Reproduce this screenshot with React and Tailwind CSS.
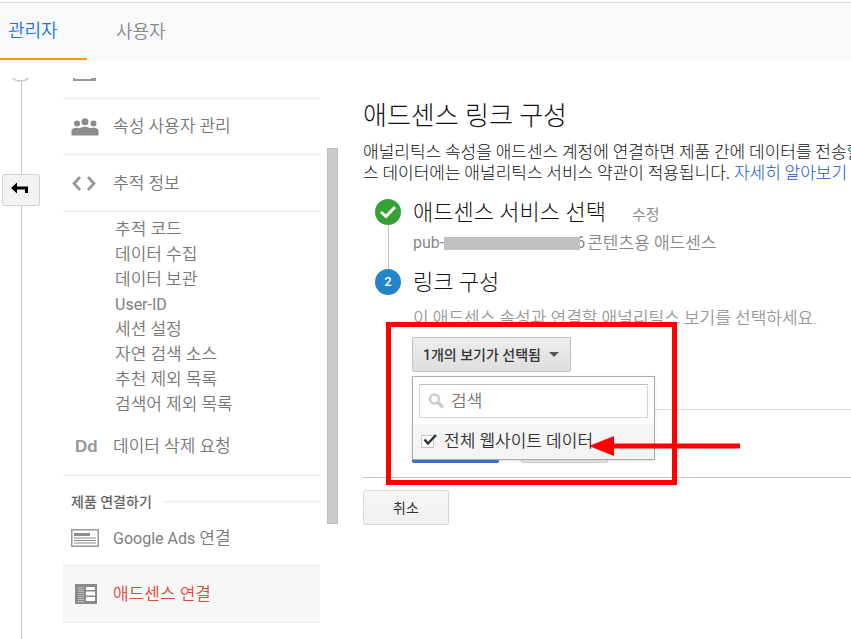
import { useState } from 'react'

const trackingItems = [
  { label: '추적 코드' },
  { label: '데이터 수집' },
  { label: '데이터 보관' },
  { label: 'User-ID', latin: true },
  { label: '세션 설정' },
  { label: '자연 검색 소스' },
  { label: '추천 제외 목록' },
  { label: '검색어 제외 목록' },
]

function UsersIcon() {
  return (
    <svg width="28" height="18" viewBox="0 0 28 18" fill="#8c8c8c" aria-hidden="true">
      <circle cx="6" cy="5.500" r="3" />
      <circle cx="14" cy="3.800" r="3.500" />
      <circle cx="22.500" cy="5.500" r="3" />
      <path d="M.5 17.500v-4.500c0-2.400 2-3.300 5.500-3.300 1.500 0 2.300.3 3.200.6 1.200-1 2.800-1.500 4.800-1.500s3.600.5 4.800 1.500c.9-.3 1.700-.6 3.200-.6 3.500 0 5.500.9 5.500 3.300v4.500z" />
    </svg>
  )
}

function CodeIcon() {
  return (
    <svg width="26" height="16" viewBox="0 0 26 16" fill="none" stroke="#999" strokeWidth="2.800" aria-hidden="true">
      <path d="M9 2 3 8.500l6 6.500M17 2l6 6.500-6 6.500" />
    </svg>
  )
}

function AdsIcon() {
  return (
    <svg width="28" height="18" viewBox="0 0 28 18" aria-hidden="true">
      <rect x=".75" y=".75" width="26.500" height="16.500" fill="#fff" stroke="#999" strokeWidth="1.500" />
      <path fill="#8c8c8c" d="M3 4h16v3H3zM3 8.500h22v1H3zM3 11h22v1H3zM3 13.500h22v1H3z" />
    </svg>
  )
}

function AdsenseIcon() {
  return (
    <svg width="22" height="20" viewBox="0 0 22 20" aria-hidden="true">
      <path fill="#8a8a8a" d="M0 0h22v20H0z" />
      <path fill="#bbb" d="M3 3h6v1H3zM3 5h6v1H3zM3 7h6v1H3zM3 9h6v1H3zM3 11h6v1H3zM3 13h6v1H3zM3 15h6v1H3zM3 17h6v1H3z" />
      <path fill="#fff" d="M11 3h9v3h-9zM11 7.500h9v4h-9zM11 13h9v4h-9z" />
    </svg>
  )
}

function NavLink({ icon, children, className }) {
  return (
    <a href="#" className={`flex items-center text-[17px] leading-[25px] ${className}`}>
      <span className="w-[50px] pl-2 shrink-0">{icon}</span>
      {children}
    </a>
  )
}

function Sidebar() {
  return (
    <nav className="w-[257px] shrink-0 font-[350] text-[#777]">
      <div className="flex h-[39px] items-start border-b border-[#ebebeb] pl-[10px] pt-[18px]">
        <svg width="23" height="3" viewBox="0 0 23 3" aria-hidden="true">
          <path fill="#999" d="M0 0h2v1h16V0h5v3H0z" />
        </svg>
      </div>
      <NavLink icon={<UsersIcon />} className="h-14 border-b border-[#ebebeb]">속성 사용자 관리</NavLink>
      <NavLink icon={<CodeIcon />} className="h-[57px] border-b border-[#ebebeb]">추적 정보</NavLink>
      <ul className="pl-[52px] pt-[5px]">
        {trackingItems.map(item => (
          <li key={item.label} className="h-[25px]">
            <a href="#" className={item.latin ? 'block text-base leading-[25px] font-normal text-[#808080]' : 'block text-[17px] leading-[25px]'}>{item.label}</a>
          </li>
        ))}
      </ul>
      <NavLink
        icon={<span className="pl-1 font-['Liberation_Sans',sans-serif] text-[17px] leading-[25px] font-bold text-[#999]">Dd</span>}
        className="h-[59px] border-b border-[#ebebeb]"
      >
        데이터 삭제 요청
      </NavLink>
      <div className="flex h-[51px] items-center gap-3 pl-2">
        <h2 className="text-sm font-medium text-[#666]">제품 연결하기</h2>
        <span className="h-px flex-1 bg-[#ebebeb]" />
      </div>
      <div className="pb-4">
        <NavLink icon={<AdsIcon />} className="h-[22px]">
          <span><span className="text-base font-normal text-[#808080]">Google Ads</span> 연결</span>
        </NavLink>
      </div>
      <NavLink icon={<span className="block pl-1"><AdsenseIcon /></span>} className="h-[58px] border-y border-[#ebebeb] bg-[#f7f7f7] text-[#dd4b39]">
        애드센스 연결
      </NavLink>
    </nav>
  )
}

function Rail() {
  return (
    <div className="flex w-[63px] shrink-0 flex-col pl-[2px] pt-[18px]">
      <svg className="ml-[9px]" width="20" height="4" viewBox="0 0 20 4" fill="none" stroke="#c8c8c8" strokeWidth="1.500" aria-hidden="true">
        <path d="M1.500 0C4 2.300 7 3 9.500 3s5.500-.7 8-3" />
      </svg>
      <span className="ml-[19px] h-[92px] w-px bg-[#c6c6c6]" />
      <button aria-label="뒤로" className="flex h-8 w-[38px] items-center justify-center rounded-xs border border-[#d4d4d4] bg-[#f3f3f3] pr-1 pb-1">
        <svg width="17" height="12" viewBox="0 0 17 12" aria-hidden="true">
          <path d="M0 6 6 .5V4.500h11V11h-3V7.500H6v4z" />
        </svg>
      </button>
      <span className="ml-[19px] w-px flex-1 bg-[#c6c6c6]" />
    </div>
  )
}

function ViewPicker() {
  const [open, setOpen] = useState(true)
  const [checked, setChecked] = useState(true)

  return (
    <div className="relative h-[72px]">
      <button
        onClick={() => setOpen(!open)}
        aria-expanded={open}
        className="flex h-[35px] w-[159px] items-center gap-2 rounded-xs border border-[#c0c0c0] bg-linear-to-b from-[#eee] to-[#dedede] pl-[10px] text-sm font-medium whitespace-nowrap text-[#333]"
      >
        1개의 보기가 선택됨
        <span className="border-x-[5px] border-t-[5px] border-x-transparent border-t-[#555]" />
      </button>
      {open && (
        <div className="absolute left-0 top-[39px] z-10 w-[243px] border border-[#acacac] bg-white pt-[7px] shadow-sm">
          <div className="mx-[6px] flex h-[34px] items-center border border-[#d4d4d4] border-t-[#c0c0c0] pl-2">
            <svg width="17" height="16" viewBox="0 0 17 16" fill="none" stroke="#ccc" aria-hidden="true">
              <circle cx="6.500" cy="6" r="4.500" strokeWidth="2.500" />
              <path d="m10 9.500 5 5" strokeWidth="3.500" />
            </svg>
            <input aria-label="검색" placeholder="검색" className="ml-[6px] w-40 text-[17px] leading-6 font-[350] outline-none placeholder:text-[#777]" />
          </div>
          <label className="mt-[6px] flex h-[35px] items-center bg-[#f4f4f4] pl-2 text-[17px] font-[350] whitespace-nowrap text-[#333]">
            <span className="relative flex">
              <input
                type="checkbox"
                checked={checked}
                onChange={e => setChecked(e.target.checked)}
                className="size-[13px] appearance-none border border-[#c6c6c6] bg-white"
              />
              {checked && (
                <svg className="pointer-events-none absolute -top-px left-[2px]" width="14" height="12" viewBox="0 0 14 12" fill="none" stroke="#333" strokeWidth="2.500" aria-hidden="true">
                  <path d="m1.500 5.500 3.500 4L13 1" />
                </svg>
              )}
            </span>
            <span className="ml-[10px]">전체 웹사이트 데이터</span>
          </label>
        </div>
      )}
      {/* highlight frame and arrow */}
      <div className="pointer-events-none absolute -left-[26px] -top-[15px] z-20 h-[163px] w-[291px] border-5 border-[#f00]" />
      <svg className="pointer-events-none absolute left-[177px] top-[98px] z-20" width="151" height="22" viewBox="0 0 151 22" fill="#f00" aria-hidden="true">
        <path d="M0 11 25 1v7.500h126v5H25V21z" />
      </svg>
    </div>
  )
}

function Main() {
  return (
    <main className="ml-[43px] min-w-0 flex-1 overflow-hidden pt-[38px] whitespace-nowrap">
      <h1 className="text-[26px] leading-9 font-light text-[#111]">애드센스 링크 구성</h1>
      <p className="mt-[6px] font-['Noto_Sans_CJK_KR',sans-serif] text-[17px] leading-[21px] font-light text-[#111]">
        애널리틱스 속성을 애드센스 계정에 연결하면 제품 간에 데이터를 전송할<br />
        스 데이터에는 애널리틱스 서비스 약관이 적용됩니다. <a href="#" className="text-[#15c]">자세히 알아보기</a>
      </p>

      <ol className="pt-[17px]">
        <li className="flex h-[70px]">
          <div className="ml-3 flex w-[26px] shrink-0 flex-col items-center">
            <span className="flex size-[26px] shrink-0 items-center justify-center rounded-full bg-[#36a136]">
              <svg width="18" height="14" viewBox="0 0 18 14" fill="none" stroke="#fff" strokeWidth="3" aria-hidden="true">
                <path d="m2 7 5 4.500L16 2" />
              </svg>
            </span>
            <span className="w-px flex-1 bg-[#c6c6c6]" />
          </div>
          <div className="ml-3">
            <div className="flex items-baseline">
              <h2 className="text-[22px] leading-7 font-light text-[#111]">애드센스 서비스 선택</h2>
              <a href="#" className="ml-[26px] text-[15px] leading-7 font-[350] text-[#888]">수정</a>
            </div>
            <p className="mt-px flex items-center text-[17px] leading-[26px] font-[350] text-[#888]">
              <span className="text-base font-normal">pub-</span>
              <span className="z-10 -mr-1 h-[13px] w-[136px] bg-[#c0c0c0]" />
              <span className="mr-[2px] text-base font-normal">6</span>
              콘텐츠용 애드센스
            </p>
          </div>
        </li>
        <li className="flex">
          <span className="ml-3 flex size-[26px] shrink-0 items-center justify-center rounded-full bg-[#2484c9] text-[13px] font-medium text-white">2</span>
          <div className="ml-[11px] min-w-0 flex-1">
            <h2 className="pl-px text-[22px] leading-7 font-light text-[#111]">링크 구성</h2>
            <p className="mt-2 mb-[6px] pl-px text-[17px] leading-[26px] font-[350] text-[#999]">이 애드센스 속성과 연결할 애널리틱스 보기를 선택하세요.</p>
            <ViewPicker />
            <hr className="border-[#ddd]" />
            <div className="mt-[18px] flex gap-[22px]">
              <button aria-label="다음" className="h-[35px] w-[87px] rounded-xs border border-[#2f6bd0] bg-[#3b7ae0]" />
              <button aria-label="이전" className="h-[35px] w-[87px] rounded-xs border border-[#d0d0d0] bg-[#eee]" />
            </div>
          </div>
        </li>
      </ol>

      <hr className="mt-[14px] border-[#c4c4c4]" />
      <button className="mt-3 h-[35px] w-[86px] rounded-xs border border-[#d8d8d8] bg-linear-to-b from-[#f6f6f6] to-[#f0f0f0] text-sm text-[#333]">취소</button>
    </main>
  )
}

export default function App() {
  return (
    <div className="flex h-screen flex-col overflow-hidden bg-white font-['Roboto','Noto_Sans_CJK_KR',sans-serif]">
      <header className="mt-[2px] shrink-0 border-t border-[#d9dbe0] bg-[#f8f9fb]">
        <nav className="flex h-[57px] text-lg font-[350]">
          <a href="#" className="flex w-[87px] items-center border-b-2 border-[#ff9800] pl-2 text-[#1a73e8]">관리자</a>
          <a href="#" className="flex items-center pl-[29px] text-[#888]">사용자</a>
        </nav>
      </header>
      <div className="flex min-h-0 flex-1">
        <Rail />
        <Sidebar />
        <div className="ml-[7px] mr-[-18px] mt-[88px] h-[376px] w-[11px] shrink-0 border border-[#bbb] bg-[#c9c9c9]" />
        <Main />
      </div>
    </div>
  )
}
